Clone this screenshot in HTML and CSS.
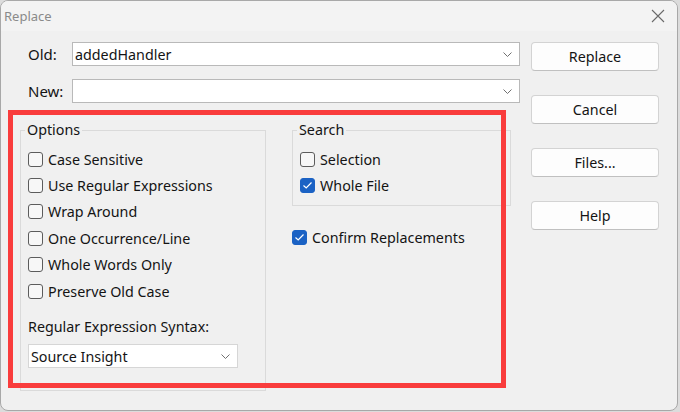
FILE: index.html
```html
<!DOCTYPE html>
<html>
<head>
<meta charset="utf-8">
<link rel="stylesheet" href="styles.css">
</head>
<body>
<div class="window">
  <div class="titlebar">
    <span class="title">Replace</span>
    <svg class="close" width="14" height="14" viewBox="0 0 14 14"><path d="M1 1 L13 13 M13 1 L1 13" stroke="#6a6a6a" stroke-width="1.1" fill="none"/></svg>
  </div>
  <div class="content">
    <div class="main">
      <div class="field-row">
        <span class="field-label">Old:</span>
        <div class="combo wide"><span class="combo-text">addedHandler</span><svg class="chev" width="9" height="5" viewBox="0 0 9 5"><path d="M0.5 0.5 L4.5 4.5 L8.5 0.5" stroke="#707070" fill="none"/></svg></div>
      </div>
      <div class="field-row second">
        <span class="field-label">New:</span>
        <div class="combo wide"><span class="combo-text"></span><svg class="chev" width="9" height="5" viewBox="0 0 9 5"><path d="M0.5 0.5 L4.5 4.5 L8.5 0.5" stroke="#707070" fill="none"/></svg></div>
      </div>
      <div class="groups">
        <fieldset class="group options">
          <legend>Options</legend>
          <div class="checks">
            <div class="check"><span class="box"></span>Case Sensitive</div>
            <div class="check"><span class="box"></span>Use Regular Expressions</div>
            <div class="check"><span class="box"></span>Wrap Around</div>
            <div class="check"><span class="box"></span>One Occurrence/Line</div>
            <div class="check"><span class="box"></span>Whole Words Only</div>
            <div class="check"><span class="box"></span>Preserve Old Case</div>
          </div>
          <div class="syntax-label">Regular Expression Syntax:</div>
          <div class="combo small"><span class="combo-text">Source Insight</span><svg class="chev" width="9" height="5" viewBox="0 0 9 5"><path d="M0.5 0.5 L4.5 4.5 L8.5 0.5" stroke="#707070" fill="none"/></svg></div>
        </fieldset>
        <div class="right-col">
          <fieldset class="group search">
            <legend>Search</legend>
            <div class="check"><span class="box"></span>Selection</div>
            <div class="check"><span class="box on"><svg width="11" height="9" viewBox="0 0 11 9"><path d="M1.5 4.5 L4.2 7 L9.5 1.5" stroke="#fff" stroke-width="1.2" fill="none"/></svg></span>Whole File</div>
          </fieldset>
          <div class="check confirm"><span class="box on"><svg width="11" height="9" viewBox="0 0 11 9"><path d="M1.5 4.5 L4.2 7 L9.5 1.5" stroke="#fff" stroke-width="1.2" fill="none"/></svg></span>Confirm Replacements</div>
        </div>
      </div>
    </div>
    <div class="buttons">
      <button class="btn">Replace</button>
      <button class="btn">Cancel</button>
      <button class="btn">Files...</button>
      <button class="btn">Help</button>
    </div>
  </div>
  <div class="annot"></div>
</div>
</body>
</html>
```
FILE: styles.css
```css
html, body {
  margin: 0;
  padding: 0;
}
body {
  background: #dcdcdc;
  width: 680px;
  height: 412px;
  overflow: hidden;
  font-family: "Noto Sans", "Open Sans", sans-serif;
  font-size: 14.3px;
  color: #141414;
}
.window {
  position: relative;
  width: 676px;
  height: 409px;
  border: 1px solid #a8a8a8;
  border-radius: 8px;
  background: #f0f0f0;
  overflow: hidden;
}
.titlebar {
  height: 30px;
  display: flex;
  align-items: center;
  justify-content: space-between;
  padding: 0 12px 0 3px;
  background: #f3f3f3;
}
.title {
  color: #8a8a8a;
  font-size: 13px;
}
.close {
  display: block;
}
.content {
  display: flex;
  padding-top: 11px;
}
.main {
  width: 519px;
}
.field-row {
  display: flex;
  align-items: center;
  padding-left: 27px;
}
.field-row.second {
  margin-top: 13px;
}
.field-label {
  flex: none;
  width: 44px;
  font-size: 15px;
}
.combo {
  box-sizing: border-box;
  flex: none;
  height: 24px;
  border: 1px solid #b9b9b9;
  background: #fff;
  display: flex;
  align-items: center;
  justify-content: space-between;
  padding: 0 7px 0 2px;
}
.combo.wide {
  width: 448px;
}
.combo.small {
  width: 210px;
  border-color: #d6d6d6;
}
.combo-text {
  font-size: 14.3px;
}
.chev {
  display: block;
}
.groups {
  display: flex;
  padding-left: 19px;
  margin-top: 19px;
}
.group {
  margin: 0;
  border: 1px solid #dadada;
  border-radius: 0;
}
.group legend {
  padding: 0 2px;
  line-height: 16px;
  font-size: 14.3px;
}
.options {
  width: 246px;
  box-sizing: border-box;
  padding: 8px 0 22px 4px;
}
.checks {
  padding-left: 3px;
}
.check {
  display: flex;
  align-items: center;
  height: 26.4px;
  white-space: nowrap;
}
.box {
  box-sizing: border-box;
  flex: none;
  width: 15px;
  height: 15px;
  border: 1px solid #5c5c5c;
  border-radius: 3px;
  background: #f7f7f7;
  margin-right: 5px;
  display: flex;
  align-items: center;
  justify-content: center;
}
.box.on {
  background: #1b62c4;
  border-color: #1b62c4;
}
.syntax-label {
  margin-top: 13px;
  margin-left: 3px;
  line-height: 20px;
}
.options .combo.small {
  margin-top: 7px;
  margin-left: 3px;
}
.right-col {
  margin-left: 26px;
}
.search {
  width: 219px;
  box-sizing: border-box;
  padding: 8px 0 6px 4px;
}
.search .check {
  padding-left: 3px;
}
.confirm {
  margin-top: 19px;
}
.buttons {
  display: flex;
  flex-direction: column;
  gap: 24px;
  margin-left: 11px;
}
.btn {
  width: 128px;
  height: 29px;
  box-sizing: border-box;
  border: 1px solid #d3d3d3;
  border-bottom-color: #c0c0c0;
  border-radius: 4px;
  background: #fdfdfd;
  font-family: inherit;
  font-size: 14.3px;
  color: #141414;
  padding: 0;
}
.annot {
  position: absolute;
  left: 7px;
  top: 109px;
  width: 488px;
  height: 268px;
  border: 5px solid #f93c3c;
}
```
